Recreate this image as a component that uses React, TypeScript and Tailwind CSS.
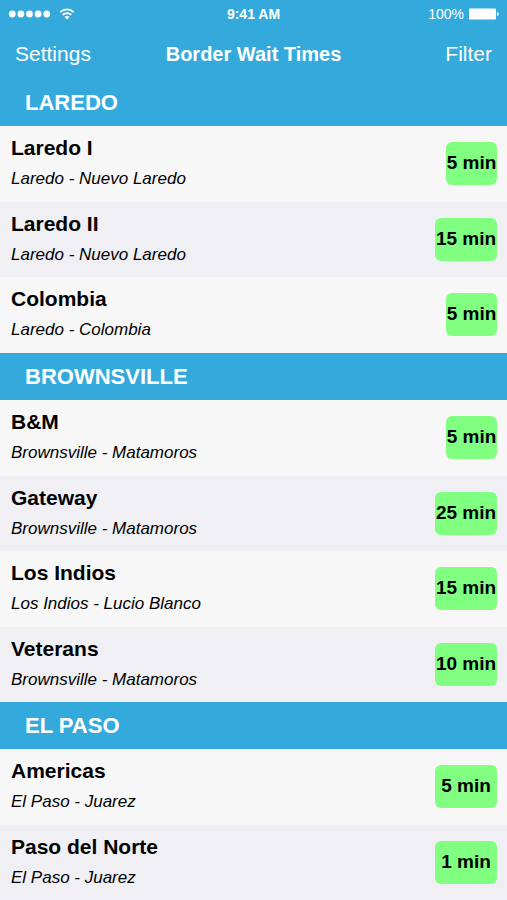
type Crossing = { name: string; route: string; wait: number; wide?: boolean };
type Region = { title: string; crossings: Crossing[] };

const regions: Region[] = [
  {
    title: 'LAREDO',
    crossings: [
      { name: 'Laredo I', route: 'Laredo - Nuevo Laredo', wait: 5 },
      { name: 'Laredo II', route: 'Laredo - Nuevo Laredo', wait: 15 },
      { name: 'Colombia', route: 'Laredo - Colombia', wait: 5 },
    ],
  },
  {
    title: 'BROWNSVILLE',
    crossings: [
      { name: 'B&M', route: 'Brownsville - Matamoros', wait: 5 },
      { name: 'Gateway', route: 'Brownsville - Matamoros', wait: 25 },
      { name: 'Los Indios', route: 'Los Indios - Lucio Blanco', wait: 15 },
      { name: 'Veterans', route: 'Brownsville - Matamoros', wait: 10 },
    ],
  },
  {
    title: 'EL PASO',
    crossings: [
      { name: 'Americas', route: 'El Paso - Juarez', wait: 5, wide: true },
      { name: 'Paso del Norte', route: 'El Paso - Juarez', wait: 1, wide: true },
    ],
  },
];

function StatusBar() {
  return (
    <div className="grid h-7 grid-cols-3 items-center px-2 text-[14px]">
      <div className="flex items-center gap-2">
        <svg className="h-2 w-[43px]" viewBox="0 0 43 8" fill="currentColor" aria-label="Signal strength">
          <circle cx="4.3" cy="4" r="3.4" />
          <circle cx="12.9" cy="4" r="3.4" />
          <circle cx="21.5" cy="4" r="3.4" />
          <circle cx="30.1" cy="4" r="3.4" />
          <circle cx="38.7" cy="4" r="3.4" />
        </svg>
        <svg className="h-3 w-4" viewBox="0 0 16 12" fill="none" stroke="currentColor" strokeWidth="1.7" aria-label="Wi-Fi">
          <path d="M1.200 4.200a9.800 9.800 0 0 1 13.600 0" />
          <path d="M3.600 6.900a6.300 6.300 0 0 1 8.800 0" />
          <path d="M8 11.600 5.500 9a3.600 3.600 0 0 1 5 0z" fill="currentColor" stroke="none" />
        </svg>
      </div>
      <time className="text-center font-bold">9:41 AM</time>
      <div className="flex items-center justify-end gap-1">
        <span>100%</span>
        <svg className="h-3 w-[31px]" viewBox="0 0 31 12" fill="currentColor" aria-label="Battery full">
          <rect x="1" y="0.500" width="27" height="11" rx="1.2" />
          <path d="M29 4v4c1.200-.3 1.800-1 1.800-2s-.6-1.700-1.800-2z" />
        </svg>
      </div>
    </div>
  );
}

function Row({ crossing }: { crossing: Crossing }) {
  return (
    <li className="flex h-[76px] items-start justify-between bg-[#f7f7f7] pr-[10px] pl-[11px] even:h-[75px] even:bg-[#efeff4]">
      <div className="pt-2">
        <h3 className="text-[21px] leading-7 font-bold">{crossing.name}</h3>
        <p className="mt-1 text-[17px] leading-[26px] italic">{crossing.route}</p>
      </div>
      <span
        className={`mt-4 flex h-[43px] items-center justify-center rounded-md bg-[#80ff80] text-[19px] font-bold whitespace-nowrap ${
          crossing.wait >= 10 || crossing.wide ? 'w-[62px]' : 'w-[51px]'
        }`}
      >
        {crossing.wait} min
      </span>
    </li>
  );
}

export default function App() {
  return (
    <div className="h-screen overflow-hidden bg-[#f7f7f7] font-['Liberation_Sans',Arial,sans-serif] text-black">
      <header className="bg-[#34aadc] text-white">
        <StatusBar />
        <nav className="grid h-[51px] grid-cols-[1fr_auto_1fr] items-center px-[15px] text-[21px]">
          <button type="button" className="justify-self-start">Settings</button>
          <h1 className="text-xl font-bold">Border Wait Times</h1>
          <button type="button" className="justify-self-end">Filter</button>
        </nav>
      </header>
      <main>
        {regions.map((region) => (
          <section key={region.title}>
            <h2 className="flex h-[47px] items-center bg-[#34aadc] px-[25px] text-[22px] font-bold text-white">
              {region.title}
            </h2>
            <ul>
              {region.crossings.map((crossing) => (
                <Row key={crossing.name} crossing={crossing} />
              ))}
            </ul>
          </section>
        ))}
      </main>
    </div>
  );
}
